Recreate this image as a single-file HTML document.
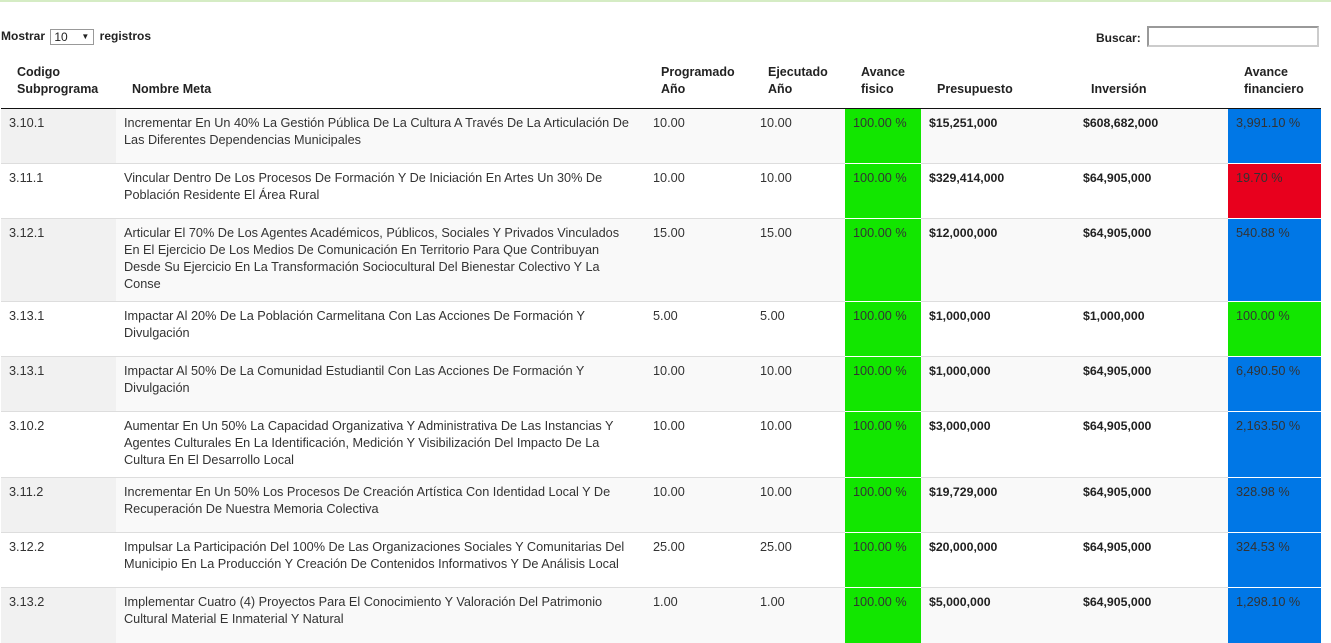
<!DOCTYPE html>
<html><head><meta charset="utf-8"><style>
*{box-sizing:border-box}
body{margin:0;width:1331px;height:617px;overflow:hidden;background:#fff;font-family:"Liberation Sans",Arial,sans-serif;color:#333;font-size:12px}
.top{height:2px;background:#d5ecc4}
.len{position:absolute;left:1px;top:29px;font-weight:bold;font-size:12px;color:#222}
.sel{display:inline-block;width:44px;height:16px;border:1px solid #999;vertical-align:middle;font-weight:normal;padding-left:3px;line-height:14px;position:relative;margin:0 2px}
.sel:after{content:"▼";position:absolute;right:4px;top:0;font-size:8px}
.flt{position:absolute;left:1096px;top:31px;font-weight:bold;color:#222}
.flt span{display:inline-block;width:172px;height:21px;border:2px solid #ccc;border-top-color:#999;border-left-color:#999;vertical-align:middle;margin-left:3px;margin-top:-5px}
table{position:absolute;left:1px;top:60px;border-collapse:collapse;table-layout:fixed;width:1320px}
th{text-align:left;font-weight:bold;font-size:12.5px;color:#222;padding:4px 10px 10px 16px;line-height:17px;vertical-align:bottom;border-bottom:1px solid #111;height:48px}
td{vertical-align:top;padding:6px 9px 0 8px;line-height:17px;border-top:1px solid #ddd;font-size:12.7px;color:#333;overflow:hidden}
td.n{padding-right:11px}
tbody tr:first-child td{border-top:none}
tr.o td{background:#f9f9f9}
tr.o td:first-child{background:#f1f1f1}
td.b{font-weight:bold;color:#222;font-size:12.3px}
td.g{background:#12e600!important;border-top:1px solid #fff}
td.bl{background:#0077e6!important;border-top:1px solid #fff}
td.r{background:#e8001d!important;border-top:1px solid #fff}
</style></head><body>
<div class="top"></div>
<div class="len">Mostrar <span class="sel">10</span> registros</div>
<div class="flt">Buscar: <span></span></div>
<table>
<colgroup><col style="width:115px"><col style="width:529px"><col style="width:107px"><col style="width:93px"><col style="width:76px"><col style="width:154px"><col style="width:153px"><col style="width:93px"></colgroup>
<thead><tr><th>Codigo Subprograma</th><th>Nombre Meta</th><th>Programado Año</th><th>Ejecutado Año</th><th>Avance fisico</th><th>Presupuesto</th><th>Inversión</th><th>Avance financiero</th></tr></thead>
<tbody>
<tr class="o" style="height:55px"><td>3.10.1</td><td class="n">Incrementar En Un 40% La Gestión Pública De La Cultura A Través De La Articulación De Las Diferentes Dependencias Municipales</td><td>10.00</td><td>10.00</td><td class="g">100.00 %</td><td class="b">$15,251,000</td><td class="b">$608,682,000</td><td class="bl">3,991.10 %</td></tr>
<tr style="height:55px"><td>3.11.1</td><td class="n">Vincular Dentro De Los Procesos De Formación Y De Iniciación En Artes Un 30% De Población Residente El Área Rural</td><td>10.00</td><td>10.00</td><td class="g">100.00 %</td><td class="b">$329,414,000</td><td class="b">$64,905,000</td><td class="r">19.70 %</td></tr>
<tr class="o" style="height:83px"><td>3.12.1</td><td class="n">Articular El 70% De Los Agentes Académicos, Públicos, Sociales Y Privados Vinculados<br>En El Ejercicio De Los Medios De Comunicación En Territorio Para Que Contribuyan<br>Desde Su Ejercicio En La Transformación Sociocultural Del Bienestar Colectivo Y La<br>Conse</td><td>15.00</td><td>15.00</td><td class="g">100.00 %</td><td class="b">$12,000,000</td><td class="b">$64,905,000</td><td class="bl">540.88 %</td></tr>
<tr style="height:55px"><td>3.13.1</td><td class="n">Impactar Al 20% De La Población Carmelitana Con Las Acciones De Formación Y Divulgación</td><td>5.00</td><td>5.00</td><td class="g">100.00 %</td><td class="b">$1,000,000</td><td class="b">$1,000,000</td><td class="g">100.00 %</td></tr>
<tr class="o" style="height:55px"><td>3.13.1</td><td class="n">Impactar Al 50% De La Comunidad Estudiantil Con Las Acciones De Formación Y Divulgación</td><td>10.00</td><td>10.00</td><td class="g">100.00 %</td><td class="b">$1,000,000</td><td class="b">$64,905,000</td><td class="bl">6,490.50 %</td></tr>
<tr style="height:66px"><td>3.10.2</td><td class="n">Aumentar En Un 50% La Capacidad Organizativa Y Administrativa De Las Instancias Y Agentes Culturales En La Identificación, Medición Y Visibilización Del Impacto De La Cultura En El Desarrollo Local</td><td>10.00</td><td>10.00</td><td class="g">100.00 %</td><td class="b">$3,000,000</td><td class="b">$64,905,000</td><td class="bl">2,163.50 %</td></tr>
<tr class="o" style="height:55px"><td>3.11.2</td><td class="n">Incrementar En Un 50% Los Procesos De Creación Artística Con Identidad Local Y De Recuperación De Nuestra Memoria Colectiva</td><td>10.00</td><td>10.00</td><td class="g">100.00 %</td><td class="b">$19,729,000</td><td class="b">$64,905,000</td><td class="bl">328.98 %</td></tr>
<tr style="height:55px"><td>3.12.2</td><td class="n">Impulsar La Participación Del 100% De Las Organizaciones Sociales Y Comunitarias Del Municipio En La Producción Y Creación De Contenidos Informativos Y De Análisis Local</td><td>25.00</td><td>25.00</td><td class="g">100.00 %</td><td class="b">$20,000,000</td><td class="b">$64,905,000</td><td class="bl">324.53 %</td></tr>
<tr class="o" style="height:55px"><td>3.13.2</td><td class="n">Implementar Cuatro (4) Proyectos Para El Conocimiento Y Valoración Del Patrimonio Cultural Material E Inmaterial Y Natural</td><td>1.00</td><td>1.00</td><td class="g">100.00 %</td><td class="b">$5,000,000</td><td class="b">$64,905,000</td><td class="bl">1,298.10 %</td></tr>
</tbody></table>
</body></html>
